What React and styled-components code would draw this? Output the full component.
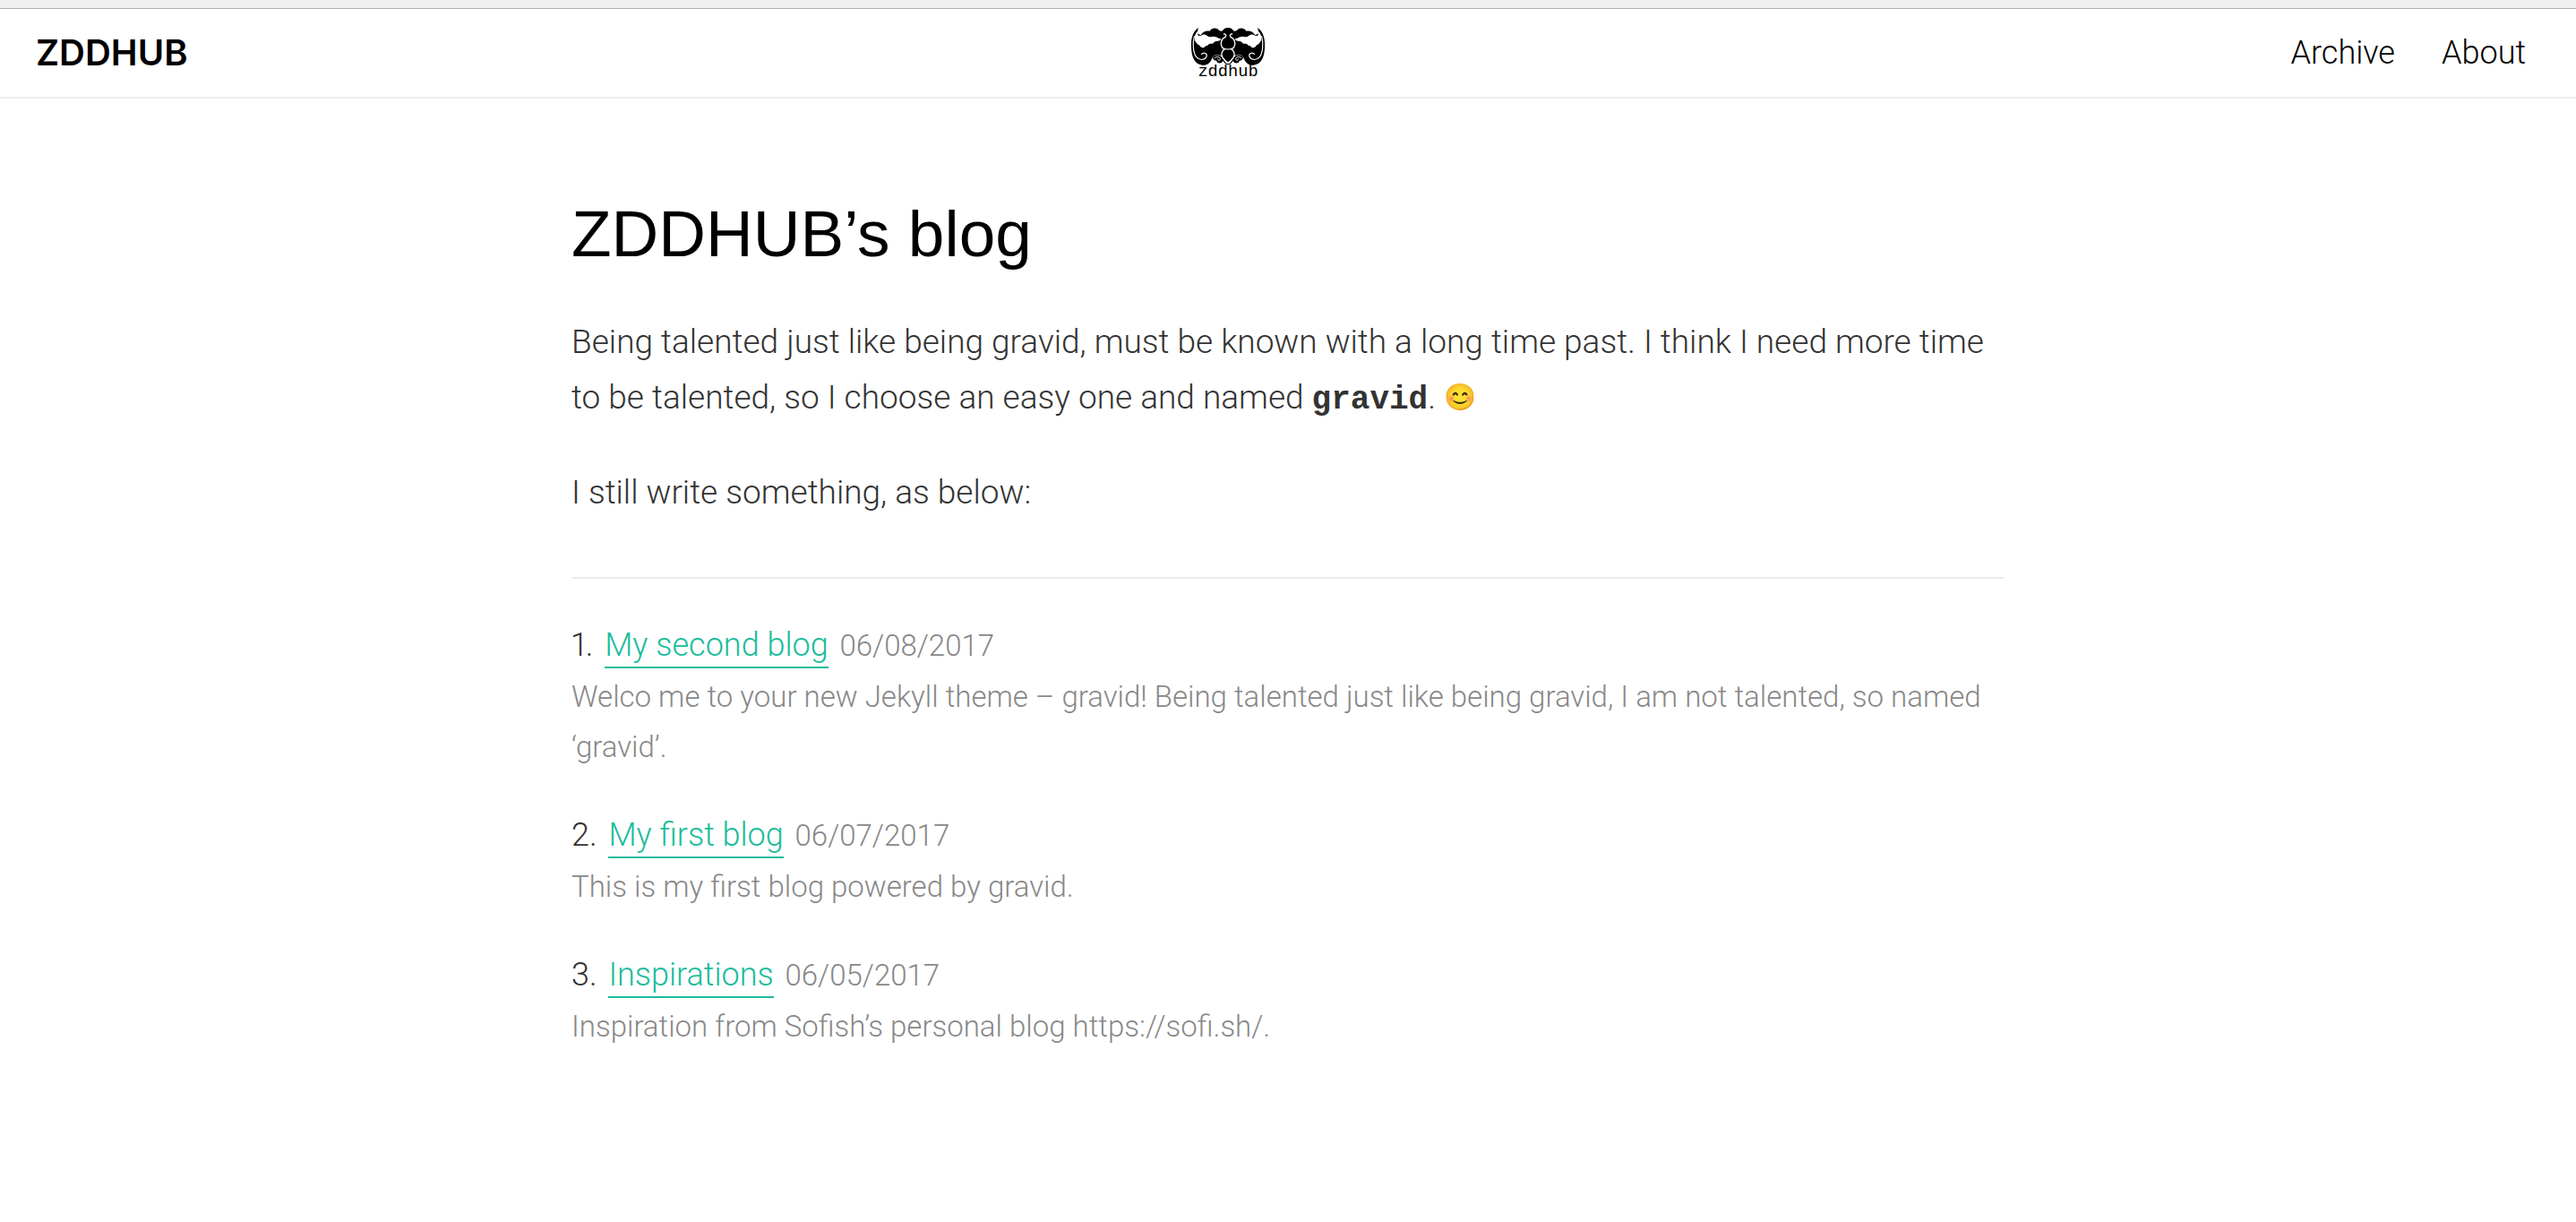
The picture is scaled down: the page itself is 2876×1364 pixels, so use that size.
import React from 'react';
import styled, { createGlobalStyle } from 'styled-components';

const Global = createGlobalStyle`
  * { box-sizing: border-box; }
  body {
    margin: 0;
    background: #fff;
    color: #333;
    font-family: Roboto, "Liberation Sans", sans-serif;
    font-size: 37px;
    font-weight: 300;
    line-height: 62px;
  }
`;

const Strip = styled.div`
  height: 10px;
  background: #f0f0f0;
  border-bottom: 1px solid #b0b0b0;
`;

const Header = styled.header`
  display: flex;
  align-items: center;
  justify-content: space-between;
  height: 100px;
  padding: 0 56px 0 40px;
  border-bottom: 2px solid #eee;
`;

const Brand = styled.a`
  color: #000;
  font-family: Inter, "Liberation Sans", sans-serif;
  font-size: 40px;
  font-weight: 600;
  text-decoration: none;
`;

const Nav = styled.nav`
  display: flex;
  gap: 52px;
  padding-left: 26px;
  font-size: 36px;
`;

const NavLink = styled.a`
  color: #000;
  text-decoration: none;
`;

const LogoLink = styled.a`
  display: flex;
`;

const Wordmark = styled.text`
  font-family: "Liberation Mono", monospace;
  font-size: 56px;
  font-weight: 400;
  text-anchor: middle;
`;

const Main = styled.main`
  max-width: 1600px;
  margin: 0 auto;
  padding: 97px 0;
`;

const Title = styled.h1`
  margin: 0 0 36px;
  color: #000;
  font-family: "Liberation Sans", Arial, sans-serif;
  font-size: 73px;
  font-weight: 400;
  line-height: 108px;
`;

const Paragraph = styled.p`
  margin: 0 0 44px;
`;

const Name = styled.code`
  font-family: "Liberation Mono", monospace;
  font-size: 36px;
  font-weight: 700;
  line-height: 1;
`;

const Emoji = styled.span`
  font-size: 29px;
  line-height: 1;
  vertical-align: 3px;
`;

const Rule = styled.hr`
  height: 2px;
  margin: 63px 0 44px;
  border: 0;
  background: #eaeaf0;
`;

const Posts = styled.ol`
  display: grid;
  gap: 40px;
  margin: 0;
  padding: 0;
  list-style: none;
`;

const PostHeading = styled.div`
  font-size: 36px;
  line-height: 60px;
`;

const PostNumber = styled.span`
  margin-right: 4px;
  font-variant-numeric: proportional-nums;
`;

const PostLink = styled.a`
  padding-bottom: 3px;
  border-bottom: 2px solid #1abc9c;
  color: #1abc9c;
  text-decoration: none;
`;

const PostDate = styled.time`
  margin-left: 4px;
  color: #888;
  font-size: 33px;
  line-height: 1;
`;

const Excerpt = styled.p`
  margin: 0;
  color: #888;
  font-size: 33px;
  line-height: 56px;
`;

const posts = [
  { title: 'My second blog', date: '06/08/2017', iso: '2017-06-08', text: 'Welco me to your new Jekyll theme – gravid! Being talented just like being gravid, I am not talented, so named ‘gravid’.' },
  { title: 'My first blog', date: '06/07/2017', iso: '2017-06-07', text: 'This is my first blog powered by gravid.' },
  { title: 'Inspirations', date: '06/05/2017', iso: '2017-06-05', text: 'Inspiration from Sofish’s personal blog https://sofi.sh/.' },
];

function Wing() {
  return (
    <>
      <path d="M84 93 C64 106 58 132 60 160 C61 194 74 217 97 218 C114 219 124 210 129 197 C132 188 137 184 146 183 L184 190 L184 93 C174 92 168 97 165 103 C158 106 153 102 148 97 C138 92 127 96 122 104 C112 103 100 104 92 118 C84 116 79 108 84 93 Z" />
      <path fill="#fff" d="M90 98 C92 103 88 108 82 113 C81 119 87 122 93 119 C101 113 108 116 114 120 C122 127 129 121 137 123 C146 122 150 130 160 130 C156 139 149 138 144 138 C138 138 136 144 131 146 C126 148 122 144 118 149 C114 154 111 151 107 155 C102 162 93 161 89 154 C86 149 80 150 76 142 C69 135 70 120 76 111 C80 105 83 101 90 98 Z" />
      <path fill="none" stroke="#fff" strokeWidth="3.5" strokeLinecap="round" d="M70 122 C64 145 66 177 77 191 C88 204 106 201 111 190 C115 179 102 173 94 182" />
      <path d="M133 190 C141 181 158 183 164 193 L173 207 C177 212 180 213 184 214 L184 217 C174 216 170 209 166 204 C161 215 146 213 145 204 C138 204 130 197 133 190 Z" />
      <path fill="none" stroke="#fff" strokeWidth="3" strokeLinecap="round" d="M138 194 C145 188 155 190 157 197 C157 205 148 203 149 198" />
    </>
  );
}

function Logo() {
  return (
    <svg width="84" height="64" viewBox="57 81 252 192" aria-hidden="true">
      <Wing />
      <g transform="translate(366 0) scale(-1 1)">
        <Wing />
      </g>
      <path fill="none" stroke="#fff" strokeWidth="4" d="M168 114 C174 112 179 117 174 124 C159 130 156 148 164 160 C171 167 195 167 202 160 C210 148 207 130 192 124 C187 117 192 112 198 114" />
      <path d="M174 167 L192 167 C202 172 205 181 202 191 L183 211 L164 191 C161 181 164 172 174 167 Z" />
      <path fill="none" stroke="#fff" strokeWidth="4" d="M172 164 C160 172 159 184 166 194 C174 205 177 209 183 209 C189 209 192 205 200 194 C207 184 206 172 194 164" />
      <Wordmark x="183" y="256">zddhub</Wordmark>
    </svg>
  );
}

export default function App() {
  return (
    <>
      <Global />
      <Strip />
      <Header>
        <Brand href="#">ZDDHUB</Brand>
        <LogoLink href="#" aria-label="zddhub home">
          <Logo />
        </LogoLink>
        <Nav>
          <NavLink href="#archive">Archive</NavLink>
          <NavLink href="#about">About</NavLink>
        </Nav>
      </Header>
      <Main>
        <Title>ZDDHUB’s blog</Title>
        <Paragraph>
          Being talented just like being gravid, must be known with a long time past. I think I need more time to be
          talented, so I choose an easy one and named <Name>gravid</Name>. <Emoji>😊</Emoji>
        </Paragraph>
        <Paragraph>I still write something, as below:</Paragraph>
        <Rule />
        <Posts>
          {posts.map((post, i) => (
            <li key={post.iso}>
              <PostHeading>
                <PostNumber>{i + 1}.</PostNumber> <PostLink href="#">{post.title}</PostLink>{' '}
                <PostDate dateTime={post.iso}>{post.date}</PostDate>
              </PostHeading>
              <Excerpt>{post.text}</Excerpt>
            </li>
          ))}
        </Posts>
      </Main>
    </>
  );
}
